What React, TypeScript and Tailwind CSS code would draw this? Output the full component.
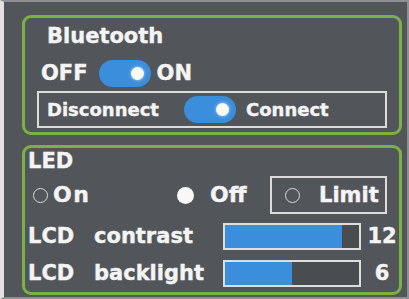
import React from "react";

const Toggle = () => (
  <div className="w-[52px] h-[27px] shrink-0 rounded-full bg-[#3a8edb] flex items-center justify-end pr-[7px]">
    <div className="w-[13px] h-[13px] shrink-0 rounded-full bg-[#fbfbf4] shadow-[0_0_3px_1px_rgba(150,200,255,0.7)]" />
  </div>
);

const Bar = ({ fill }: { fill: string }) => (
  <div className="w-[138px] h-[27px] shrink-0 border-2 border-[#dedede] bg-[#4a4d50] flex">
    <div className={`${fill} h-full bg-[#3a8edb]`} />
  </div>
);

const Ring = () => (
  <div className="w-[16px] h-[16px] shrink-0 flex items-center justify-center">
    <div className="w-[15px] h-[15px] rounded-full border-[1.5px] border-solid border-[#d8d8d8] bg-transparent" />
  </div>
);

export default function App() {
  return (
    <div className="w-[409px] h-[299px] bg-[#525559] border-t-2 border-r-2 border-b-2 border-l-4 border-[#8e9092] border-l-[#e2e2e2] pt-[13px] pl-[18px] font-['DejaVu_Sans',sans-serif] font-bold text-[#f4f4f4] [-webkit-text-stroke:0.4px_#f4f4f4]">
      <div className="w-[380px] h-[120px] border-[3px] border-[#7bb343] rounded-[9px] flex flex-col">
        <div className="pt-[6px] pl-[22px] text-[21px] leading-[24px]">Bluetooth</div>
        <div className="mt-[12px] ml-[16px] h-[27px] flex items-center text-[21px] leading-none">
          <span>OFF</span>
          <div className="ml-[11px]">
            <Toggle />
          </div>
          <span className="ml-[6px]">ON</span>
        </div>
        <div className="mt-[4px] mx-[12px] h-[37px] border-2 border-[#dcdcdc] flex items-center pl-[8px] text-[18px] leading-none">
          <span>Disconnect</span>
          <div className="ml-[25px]">
            <Toggle />
          </div>
          <span className="ml-[10px]">Connect</span>
        </div>
      </div>
      <div className="mt-[10px] w-[380px] h-[150px] border-[3px] border-[#7bb343] rounded-[9px] flex flex-col">
        <div className="pt-[2px] pl-[3px] text-[21px] leading-[22px]">LED</div>
        <div className="mt-[4px] h-[38px] flex items-center pl-[7px] text-[22px] leading-none">
          <div className="w-[145px] shrink-0 flex items-center">
            <Ring />
            <span className="ml-[5px] tracking-[1.5px]">On</span>
          </div>
          <div className="w-[17px] h-[17px] shrink-0 rounded-full bg-[#f8f8f8]" />
          <span className="ml-[16px]">Off</span>
          <div className="ml-auto mr-[12px] w-[117px] h-[38px] shrink-0 border-2 border-[#dcdcdc] flex items-center pl-[12px] text-[21px]">
            <Ring />
            <span className="ml-[19px]">Limit</span>
          </div>
        </div>
        <div className="mt-[9px] h-[27px] flex items-center pl-[3px] text-[21px] leading-none">
          <span className="w-[66px] shrink-0">LCD</span>
          <span className="w-[129px] shrink-0">contrast</span>
          <Bar fill="w-[117px]" />
          <span className="ml-[4px] w-[34px] text-center">12</span>
        </div>
        <div className="mt-[10px] h-[27px] flex items-center pl-[3px] text-[21px] leading-none">
          <span className="w-[66px] shrink-0">LCD</span>
          <span className="w-[129px] shrink-0">backlight</span>
          <Bar fill="w-[67px]" />
          <span className="ml-[4px] w-[34px] text-center">6</span>
        </div>
      </div>
    </div>
  );
}
